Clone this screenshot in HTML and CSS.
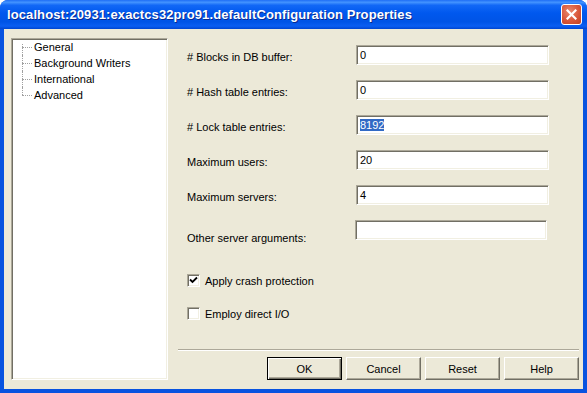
FILE: index.html
```html
<!DOCTYPE html>
<html lang="en">

<head>
    <meta charset="UTF-8">
    <title>Properties</title>
    <link rel="stylesheet" href="styles.css">
</head>

<body>
    <div class="window">
        <div class="titlebar">
            <span class="title">localhost:20931:exactcs32pro91.defaultConfiguration Properties</span>
            <button class="close">
                <svg width="11" height="11" viewBox="0 0 11 11">
                    <path d="M1.5 1.5 L9.5 9.5 M9.5 1.5 L1.5 9.5" stroke="#fff" stroke-width="2.2" stroke-linecap="square" />
                </svg>
            </button>
        </div>

        <div class="frame">
            <!--Tree-->
            <div class="tree">
                <ul>
                    <li>General</li>
                    <li>Background Writers</li>
                    <li>International</li>
                    <li>Advanced</li>
                </ul>
            </div>

            <!--Main-->
            <div class="main">
                <div class="fields">
                    <label class="field-label"># Blocks in DB buffer:</label>
                    <div class="input">0</div>

                    <label class="field-label"># Hash table entries:</label>
                    <div class="input">0</div>

                    <label class="field-label"># Lock table entries:</label>
                    <div class="input"><span class="selected">8192</span></div>

                    <label class="field-label">Maximum users:</label>
                    <div class="input">20</div>

                    <label class="field-label">Maximum servers:</label>
                    <div class="input">4</div>

                    <label class="field-label low">Other server arguments:</label>
                    <div class="input shifted"></div>
                </div>

                <div class="checks">
                    <div class="check">
                        <span class="box">
                            <svg width="9" height="9" viewBox="0 0 9 9">
                                <path d="M1 3.5 L3.5 6 L8 1.5" fill="none" stroke="#000" stroke-width="1.8" />
                            </svg>
                        </span>
                        Apply crash protection
                    </div>
                    <div class="check">
                        <span class="box"></span>
                        Employ direct I/O
                    </div>
                </div>

                <div class="separator"></div>

                <div class="buttons">
                    <button class="btn default">OK</button>
                    <button class="btn">Cancel</button>
                    <button class="btn">Reset</button>
                    <button class="btn">Help</button>
                </div>
            </div>
        </div>
    </div>
</body>

</html>
```

FILE: styles.css
```css
/*General*/
* {
    margin: 0;
    padding: 0;
    box-sizing: border-box;
}

html {
    font-family: 'Liberation Sans', Arial, sans-serif;
    font-size: 11px;
}

body {
    width: 587px;
    height: 393px;
    overflow: hidden;
    background-color: #ffffff;
}

/*Window*/
.window {
    display: flex;
    flex-direction: column;
    height: 393px;
    border-radius: 8px 8px 0 0;
    overflow: hidden;
    background-color: #0853e0;
}

/*Titlebar*/
.titlebar {
    display: flex;
    flex-direction: row;
    align-items: center;
    justify-content: space-between;
    height: 29px;
    padding: 0 5px 0 7px;
    background: linear-gradient(#1f6ef5 0%, #4393ff 8%, #1268f6 18%, #0058ee 45%, #0054e6 75%, #0a5ef2 90%, #0045d0 100%);
}

.titlebar .title {
    color: #ffffff;
    font-weight: 700;
    font-size: 13px;
    letter-spacing: 0.1px;
    text-shadow: 1px 1px #0a2a8f;
    white-space: nowrap;
}

.titlebar .close {
    display: flex;
    align-items: center;
    justify-content: center;
    width: 21px;
    height: 21px;
    border: 1px solid #ffffff;
    border-radius: 3px;
    background: radial-gradient(circle at 40% 35%, #e98a6f 0%, #d9573a 55%, #c0401f 100%);
}

/*Frame*/
.frame {
    flex: 1;
    display: flex;
    flex-direction: row;
    background-color: #ece9d8;
    border: 4px solid #0853e0;
    border-top: none;
    padding: 9px 4px 9px 7px;
}

/*Tree*/
.tree {
    width: 157px;
    flex-shrink: 0;
    background-color: #ffffff;
    border: 1px solid;
    border-color: #aca899 #ffffff #ffffff #aca899;
    box-shadow: inset 1px 1px #716f64, inset -1px -1px #f1efe2;
    padding: 1px;
}

.tree ul {
    list-style: none;
    margin-top: -1px;
}

.tree li {
    position: relative;
    height: 16px;
    line-height: 16px;
    padding-left: 21px;
    color: #000000;
    white-space: nowrap;
}

.tree li::before {
    content: '';
    position: absolute;
    left: 9px;
    top: 8px;
    width: 10px;
    border-top: 1px dotted #a0a0a0;
}

.tree li::after {
    content: '';
    position: absolute;
    left: 9px;
    top: 0;
    bottom: 0;
    border-left: 1px dotted #a0a0a0;
}

.tree li:first-child::after {
    top: 5px;
}

.tree li:last-child::after {
    bottom: 8px;
}

/*Main*/
.main {
    flex: 1;
    display: flex;
    flex-direction: column;
    margin-left: 10px;
}

.fields {
    display: grid;
    grid-template-columns: 169px 193px;
    grid-auto-rows: 20px;
    row-gap: 15px;
    margin-top: 7px;
    padding-left: 9px;
}

.field-label {
    align-self: center;
    padding-top: 3px;
    color: #000000;
    white-space: nowrap;
}

.field-label.low {
    padding-top: 15px;
}

.input {
    height: 20px;
    line-height: 16px;
    padding-left: 3px;
    background-color: #ffffff;
    border: 1px solid;
    border-color: #aca899 #ffffff #ffffff #aca899;
    box-shadow: inset 1px 1px #716f64, inset -1px -1px #f1efe2;
    padding-top: 1px;
}

.input.shifted {
    margin-left: -1px;
    width: 192px;
}

.input .selected {
    background-color: #316ac5;
    color: #ffffff;
}

/*Checks*/
.checks {
    display: flex;
    flex-direction: column;
    gap: 20px;
    margin-top: 34px;
    padding-left: 9px;
}

.check {
    display: flex;
    flex-direction: row;
    align-items: center;
    height: 13px;
    white-space: nowrap;
}

.check .box {
    display: flex;
    align-items: center;
    justify-content: center;
    width: 13px;
    height: 13px;
    margin-right: 5px;
    background-color: #ffffff;
    border: 1px solid;
    border-color: #aca899 #ffffff #ffffff #aca899;
    box-shadow: inset 1px 1px #716f64, inset -1px -1px #f1efe2;
}

/*Separator*/
.separator {
    height: 2px;
    margin-top: 29px;
    border-top: 1px solid #aca899;
    border-bottom: 1px solid #ffffff;
}

/*Buttons*/
.buttons {
    display: flex;
    flex-direction: row;
    justify-content: flex-end;
    gap: 4px;
    margin-top: 6px;
}

.btn {
    width: 75px;
    height: 23px;
    font-family: inherit;
    font-size: 11px;
    color: #000000;
    background-color: #ece9d8;
    border: 1px solid;
    border-color: #ffffff #716f64 #716f64 #ffffff;
    box-shadow: inset -1px -1px #aca899;
}

.btn.default {
    border-color: #000000;
    box-shadow: inset 1px 1px #ffffff, inset -1px -1px #716f64, inset -2px -2px #aca899;
}
```
